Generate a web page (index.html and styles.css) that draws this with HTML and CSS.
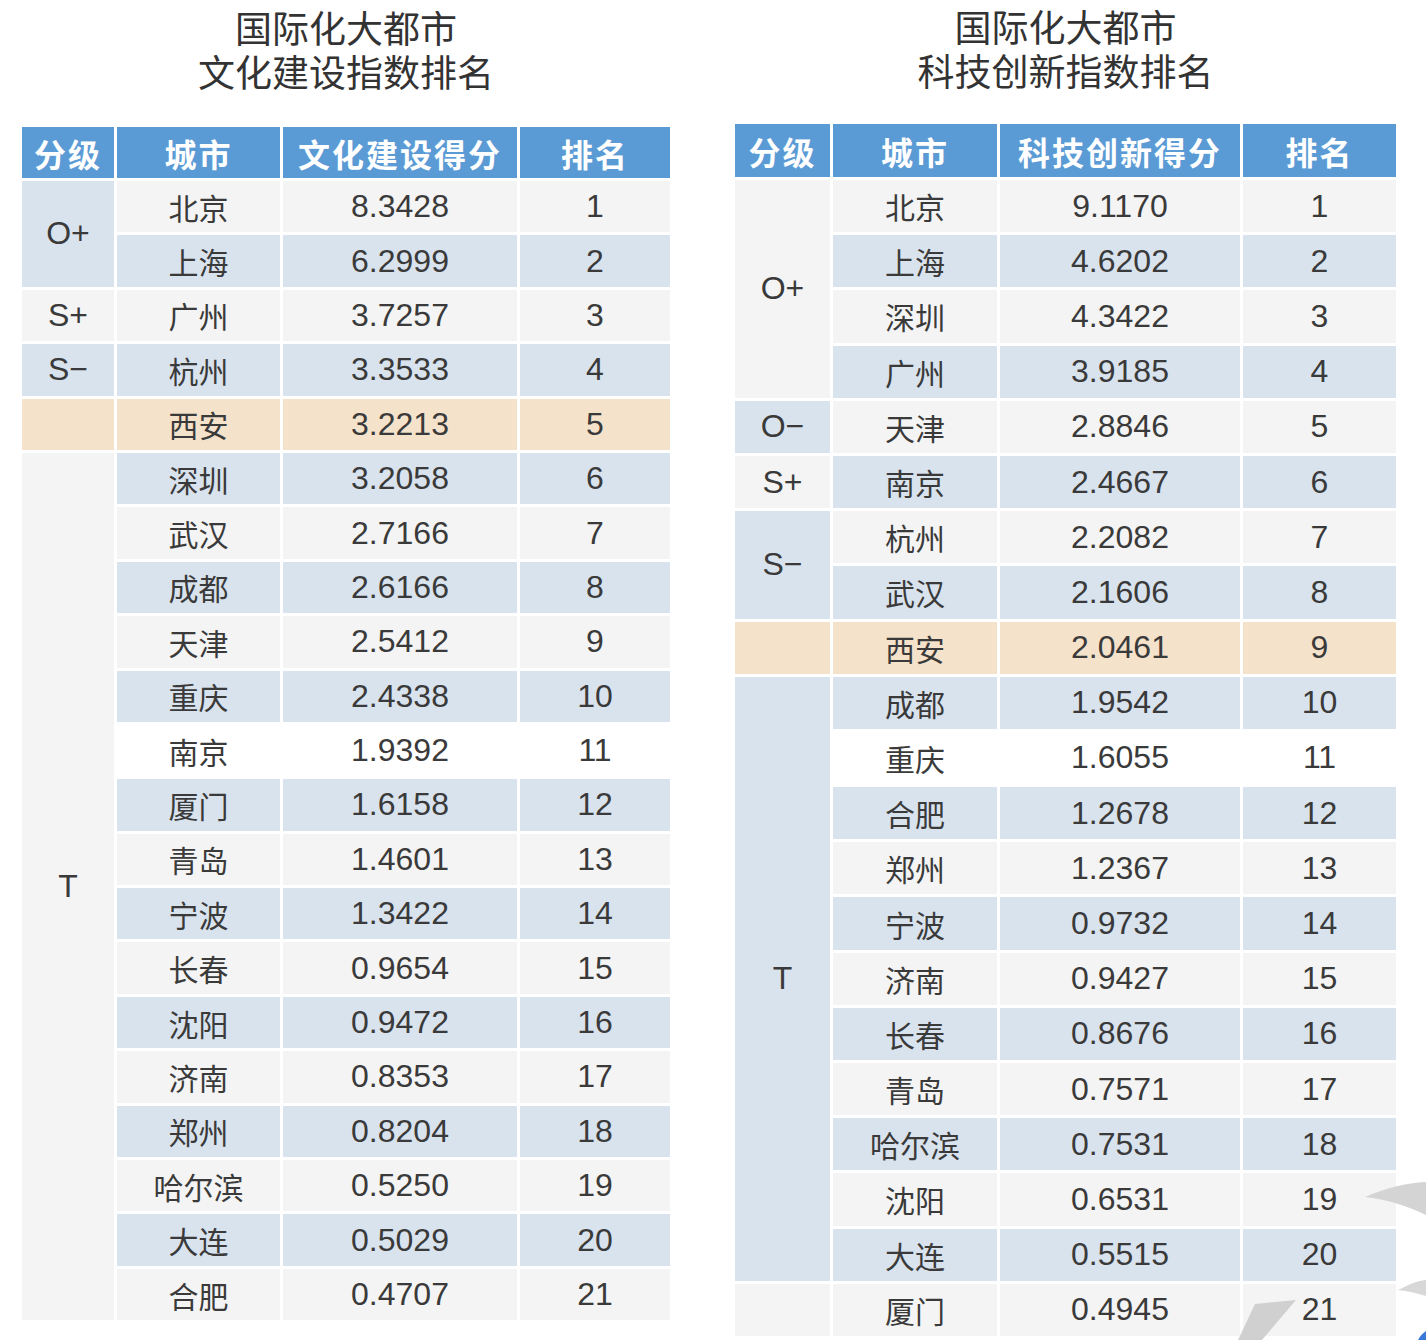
FILE: index.html
```html
<!DOCTYPE html>
<html lang="zh-CN">
<head>
<meta charset="utf-8">
<title>国际化大都市指数排名</title>
<link rel="stylesheet" href="styles.css">
</head>
<body>
<div class="page">
  <section class="panel panel-left">
    <h1 class="title"><span class="tl">国际化大都市</span><span class="tl">文化建设指数排名</span></h1>
    <div class="grid grid-left">
      <div class="hd">分级</div><div class="hd">城市</div><div class="hd">文化建设得分</div><div class="hd">排名</div>
      <div class="grade b span2">O+</div><div class="g">北京</div><div class="g num">8.3428</div><div class="g num">1</div>
      <div class="b">上海</div><div class="b num">6.2999</div><div class="b num">2</div>
      <div class="grade g">S+</div><div class="g">广州</div><div class="g num">3.7257</div><div class="g num">3</div>
      <div class="grade b">S−</div><div class="b">杭州</div><div class="b num">3.3533</div><div class="b num">4</div>
      <div class="grade o"></div><div class="o">西安</div><div class="o num">3.2213</div><div class="o num">5</div>
      <div class="grade g span16">T</div><div class="b">深圳</div><div class="b num">3.2058</div><div class="b num">6</div>
      <div class="g">武汉</div><div class="g num">2.7166</div><div class="g num">7</div>
      <div class="b">成都</div><div class="b num">2.6166</div><div class="b num">8</div>
      <div class="g">天津</div><div class="g num">2.5412</div><div class="g num">9</div>
      <div class="b">重庆</div><div class="b num">2.4338</div><div class="b num">10</div>
      <div class="w">南京</div><div class="w num">1.9392</div><div class="w num">11</div>
      <div class="b">厦门</div><div class="b num">1.6158</div><div class="b num">12</div>
      <div class="g">青岛</div><div class="g num">1.4601</div><div class="g num">13</div>
      <div class="b">宁波</div><div class="b num">1.3422</div><div class="b num">14</div>
      <div class="g">长春</div><div class="g num">0.9654</div><div class="g num">15</div>
      <div class="b">沈阳</div><div class="b num">0.9472</div><div class="b num">16</div>
      <div class="g">济南</div><div class="g num">0.8353</div><div class="g num">17</div>
      <div class="b">郑州</div><div class="b num">0.8204</div><div class="b num">18</div>
      <div class="g">哈尔滨</div><div class="g num">0.5250</div><div class="g num">19</div>
      <div class="b">大连</div><div class="b num">0.5029</div><div class="b num">20</div>
      <div class="g">合肥</div><div class="g num">0.4707</div><div class="g num">21</div>
    </div>
  </section>
  <section class="panel panel-right">
    <h1 class="title"><span class="tl">国际化大都市</span><span class="tl">科技创新指数排名</span></h1>
    <div class="grid grid-right">
      <div class="hd">分级</div><div class="hd">城市</div><div class="hd">科技创新得分</div><div class="hd">排名</div>
      <div class="grade g span4">O+</div><div class="g">北京</div><div class="g num">9.1170</div><div class="g num">1</div>
      <div class="b">上海</div><div class="b num">4.6202</div><div class="b num">2</div>
      <div class="g">深圳</div><div class="g num">4.3422</div><div class="g num">3</div>
      <div class="b">广州</div><div class="b num">3.9185</div><div class="b num">4</div>
      <div class="grade b">O−</div><div class="g">天津</div><div class="g num">2.8846</div><div class="g num">5</div>
      <div class="grade g">S+</div><div class="b">南京</div><div class="b num">2.4667</div><div class="b num">6</div>
      <div class="grade b span2">S−</div><div class="g">杭州</div><div class="g num">2.2082</div><div class="g num">7</div>
      <div class="b">武汉</div><div class="b num">2.1606</div><div class="b num">8</div>
      <div class="grade o"></div><div class="o">西安</div><div class="o num">2.0461</div><div class="o num">9</div>
      <div class="grade b span11">T</div><div class="b">成都</div><div class="b num">1.9542</div><div class="b num">10</div>
      <div class="w">重庆</div><div class="w num">1.6055</div><div class="w num">11</div>
      <div class="b">合肥</div><div class="b num">1.2678</div><div class="b num">12</div>
      <div class="g">郑州</div><div class="g num">1.2367</div><div class="g num">13</div>
      <div class="b">宁波</div><div class="b num">0.9732</div><div class="b num">14</div>
      <div class="g">济南</div><div class="g num">0.9427</div><div class="g num">15</div>
      <div class="b">长春</div><div class="b num">0.8676</div><div class="b num">16</div>
      <div class="g">青岛</div><div class="g num">0.7571</div><div class="g num">17</div>
      <div class="b">哈尔滨</div><div class="b num">0.7531</div><div class="b num">18</div>
      <div class="g">沈阳</div><div class="g num">0.6531</div><div class="g num">19</div>
      <div class="b">大连</div><div class="b num">0.5515</div><div class="b num">20</div>
      <div class="grade g"></div><div class="g">厦门</div><div class="g num">0.4945</div><div class="g num">21</div>
    </div>
  </section>
  <svg class="watermark" width="200" height="170" viewBox="0 0 200 170" aria-hidden="true">
    <path d="M139 27 C160 18 180 13 200 12 L200 45 C182 36 160 29 139 27 Z" fill="#d4d4d4"/>
    <path d="M172 120 C182 115 190 111 200 110 L200 126 C190 123 182 121 172 120 Z" fill="#d8d8d8"/>
    <path d="M29 134 L70 130 L36 170 L12 170 Z" fill="#d0d0d0"/>
    <path d="M192 170 C194 166 197 163 200 161 L200 170 Z" fill="#3a78d8"/>
  </svg>
</div>
</body>
</html>
```

FILE: styles.css
```css
html, body {
  margin: 0;
  padding: 0;
  background: #ffffff;
}

body {
  font-family: "Liberation Sans", "Noto Sans CJK SC", sans-serif;
  color: #3a3a3a;
}

.page {
  position: relative;
  width: 1426px;
  height: 1340px;
  display: flex;
  align-items: flex-start;
  gap: 65px;
  padding-left: 22px;
  box-sizing: border-box;
  overflow: hidden;
}

.panel {
  display: flex;
  flex-direction: column;
}

.title {
  margin: 0;
  display: flex;
  flex-direction: column;
  align-items: center;
  font-family: "Noto Sans CJK SC", sans-serif;
  font-weight: 400;
  font-size: 37px;
  color: #333333;
}

.tl {
  display: block;
  height: 44px;
  line-height: 44px;
  white-space: nowrap;
}

.panel-left .title {
  padding-top: 5px;
  margin-bottom: 34px;
}

.panel-right .title {
  padding-top: 4px;
  margin-bottom: 32px;
}

.grid {
  display: grid;
  gap: 3px;
}

.grid-left {
  width: 648px;
  grid-template-columns: 92px 163px 234px 150px;
  grid-template-rows: 51px repeat(21, 51.4px);
}

.grid-right {
  width: 661px;
  grid-template-columns: 95px 164px 240px 153px;
  grid-template-rows: 53px repeat(21, 52.2px);
}

.grid > div {
  display: flex;
  align-items: center;
  justify-content: center;
  font-family: "Noto Sans CJK SC", sans-serif;
  font-size: 30px;
  color: #3a3a3a;
}

.grid > .num,
.grid > .grade {
  font-family: "Liberation Sans", sans-serif;
  font-size: 32px;
}

.grid > .hd {
  background: #5b9bd5;
  color: #ffffff;
  font-weight: 700;
  font-size: 32px;
  letter-spacing: 2px;
}

.b { background: #d9e3ee; }
.g { background: #f4f4f4; }
.w { background: #ffffff; }
.o { background: #f5e2cb; }

.span2 { grid-row: span 2; }
.span4 { grid-row: span 4; }
.span11 { grid-row: span 11; }
.span16 { grid-row: span 16; }

.watermark {
  position: absolute;
  right: 0;
  bottom: 0;
}
```
